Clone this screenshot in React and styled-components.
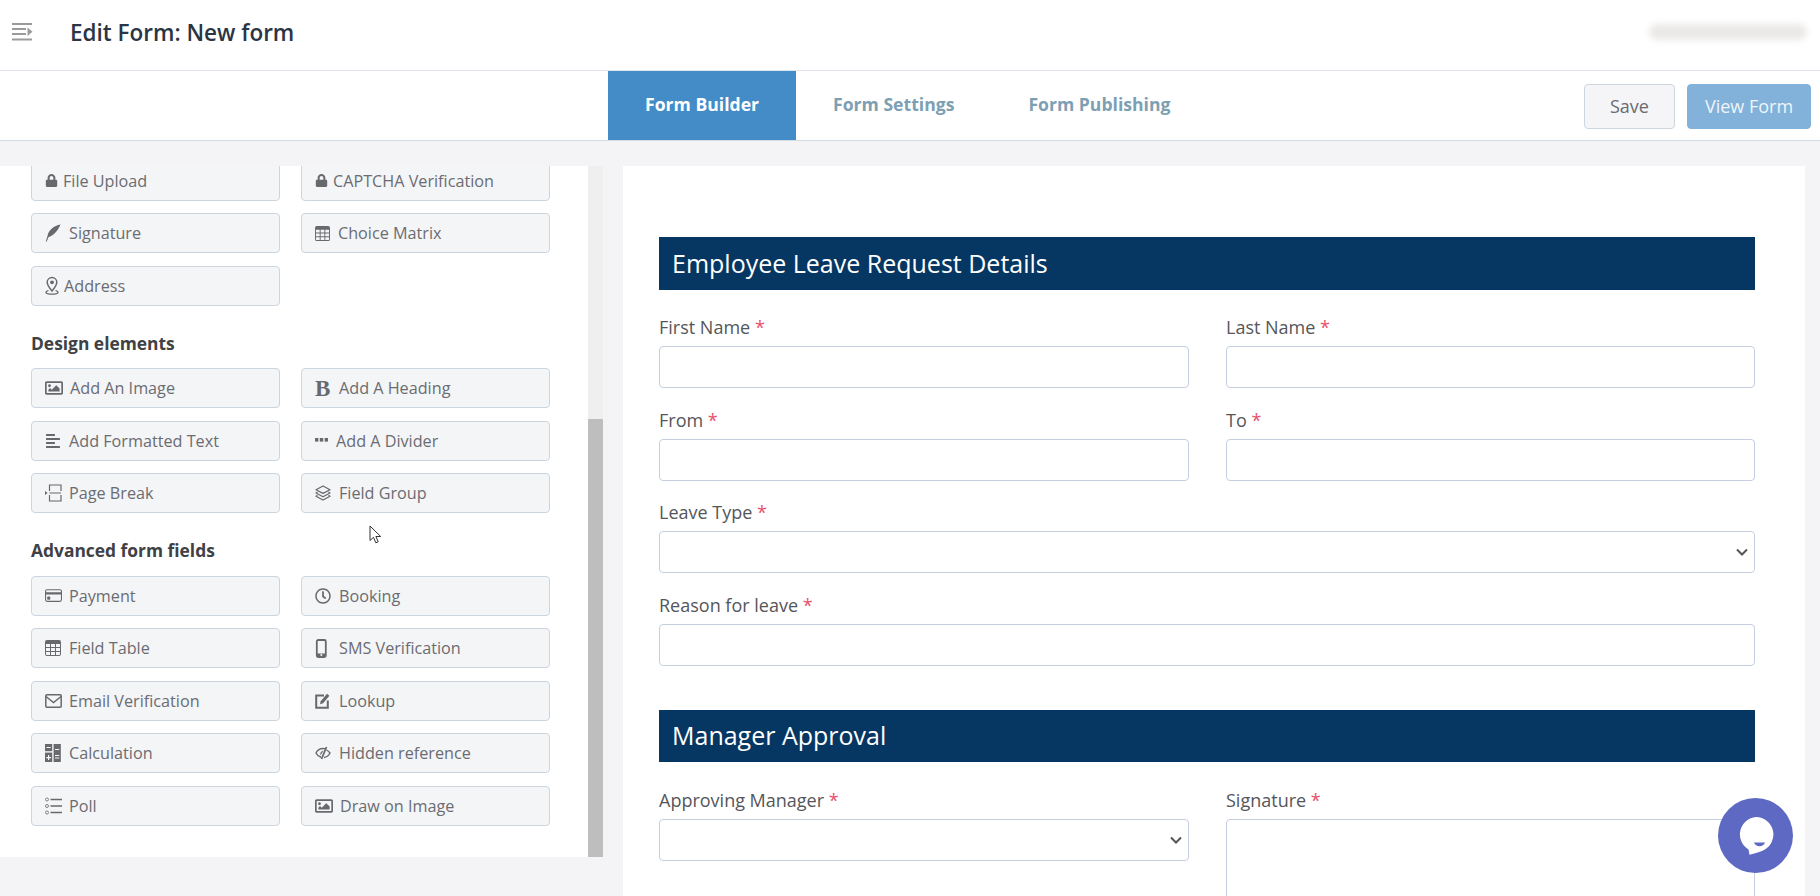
import React from 'react'
import styled, { createGlobalStyle } from 'styled-components'
import { FaLock, FaRegImage, FaAlignLeft, FaRegClock } from 'react-icons/fa'
import { BsTable, BsCreditCard } from 'react-icons/bs'

const GlobalStyle = createGlobalStyle`
  html, body { margin: 0; padding: 0; height: 100%; overflow: hidden; }
  body { font-family: "Open Sans", "Liberation Sans", sans-serif; background: #f4f4f6; }
  * { box-sizing: border-box; }
`

const Page = styled.div`
  width: 1820px;
  height: 896px;
  overflow: hidden;
  position: relative;
  background: #f4f4f6;
`
const Header = styled.header`
  height: 71px;
  background: #fff;
  border-bottom: 1px solid #dfe5ea;
  display: flex;
  align-items: center;
  padding: 0 13px 6px 12px;
`
const Title = styled.h1`
  margin: 0 0 0 37px;
  font-size: 22.5px;
  font-weight: 600;
  color: #2b3543;
`
const BlurredUser = styled.div`
  margin-left: auto;
  width: 158px;
  height: 16px;
  border-radius: 8px;
  background: #ebe9e8;
  filter: blur(3px);
`
const TabBar = styled.nav`
  height: 70px;
  background: #fff;
  border-bottom: 1px solid #d3dbe3;
  display: flex;
  align-items: stretch;
  padding: 0 9px 0 608px;
`
const Tab = styled.div`
  display: flex;
  align-items: center;
  padding: 0 37px 3px;
  font-size: 17.6px;
  font-weight: 700;
  color: ${p => (p.$active ? '#fff' : '#7d9fb3')};
  background: ${p => (p.$active ? '#448cc7' : 'transparent')};
`
const Actions = styled.div`
  margin-left: auto;
  display: flex;
  gap: 12px;
  padding-top: 13px;
`
const ActionButton = styled.div`
  height: 45px;
  width: ${p => p.$width}px;
  display: flex;
  align-items: center;
  justify-content: center;
  padding-bottom: 2px;
  border-radius: 4px;
  font-size: 18px;
  color: ${p => (p.$primary ? '#eef5fb' : '#6a6a70')};
  background: ${p => (p.$primary ? '#82b1d9' : '#f5f5f7')};
  border: 1px solid ${p => (p.$primary ? '#82b1d9' : '#cdd6de')};
`
const Body = styled.main`
  display: flex;
  padding-top: 25px;
  height: 755px;
`
const Sidebar = styled.aside`
  width: 603px;
  height: 691px;
  display: flex;
  flex: none;
  background: #fff;
  overflow: hidden;
`
const SidebarList = styled.div`
  flex: 1;
  padding: 0 38px 0 31px;
  margin-top: -5.5px;
`
const ElementGrid = styled.div`
  display: grid;
  grid-template-columns: 249px 249px;
  column-gap: 21px;
  row-gap: 12.5px;
`
const GroupTitle = styled.h3`
  margin: 26px 0 14.5px;
  font-size: 17.4px;
  line-height: 22px;
  font-weight: 700;
  color: #404145;
`
const ElementButton = styled.div`
  height: 40px;
  display: flex;
  align-items: center;
  padding-left: 13px;
  background: #f4f5f7;
  border: 1px solid #ccd5de;
  border-radius: 4px;
  font-size: 16.2px;
  color: #6b6c71;
`
const IconBox = styled.span`
  width: ${p => p.$offset - 13}px;
  flex: none;
  display: flex;
  align-items: center;
  color: #68696d;
  font-size: ${p => p.$size || 16}px;
  svg { display: block; }
`
const SerifB = styled.span`
  font-family: "Liberation Serif", serif;
  font-weight: 700;
  font-size: 23px;
  line-height: 1;
`
const ScrollTrack = styled.div`
  width: 15px;
  flex: none;
  background: #efefef;
  display: flex;
  flex-direction: column;
  padding-top: 253px;
`
const ScrollThumb = styled.div`
  flex: 1;
  background: #bebebe;
`
const Card = styled.section`
  flex: 1;
  margin: 0 15px 0 20px;
  padding: 71px 50px 0 36px;
  background: #fff;
  overflow: hidden;
`
const SectionBar = styled.div`
  height: ${p => p.$height}px;
  display: flex;
  align-items: center;
  padding: 0 0 1px 13px;
  background: #063763;
  color: #fff;
  font-size: 25px;
`
const FieldGrid = styled.div`
  display: grid;
  grid-template-columns: 530px 529px;
  column-gap: 37px;
  row-gap: 21.5px;
  margin: ${p => p.$top}px 0 44px;
`
const Field = styled.div`
  grid-column: ${p => (p.$wide ? '1 / -1' : 'auto')};
`
const Label = styled.label`
  display: block;
  height: 22px;
  line-height: 20px;
  margin-bottom: 7px;
  font-size: 18px;
  color: #55565a;
`
const Required = styled.span`
  color: #e8506a;
`
const TextInput = styled.input`
  display: block;
  width: 100%;
  height: 42px;
  background: #fff;
  border: 1px solid #c5cfe0;
  border-radius: 4px;
`
const SelectInput = styled.select`
  display: block;
  width: 100%;
  height: 42px;
  appearance: none;
  border: 1px solid #c5cfe0;
  border-radius: 4px;
  background: #fff url("data:image/svg+xml,%3Csvg xmlns='http://www.w3.org/2000/svg' width='12' height='8' viewBox='0 0 12 8'%3E%3Cpath d='M1 1.500l5 5 5-5' fill='none' stroke='%23555' stroke-width='2'/%3E%3C/svg%3E") no-repeat right 6px center;
`
const SignatureBox = styled.div`
  height: 120px;
  margin-top: 1px;
  border: 1px solid #c5cfe0;
  border-radius: 4px;
`
const ChatBubble = styled.div`
  position: absolute;
  left: 1718px;
  top: 798px;
  width: 75px;
  height: 75px;
  border-radius: 50%;
  background: #5d69c2;
  display: flex;
  align-items: center;
  justify-content: center;
`
const Cursor = styled.svg`
  position: absolute;
  left: 369px;
  top: 525px;
`

const MenuIcon = () => (
  <svg width="21" height="18" viewBox="0 0 21 18" fill="#9b9b9b">
    <rect x="0" y="0" width="20" height="2" />
    <rect x="0" y="5" width="14" height="2" />
    <rect x="0" y="10" width="14" height="2" />
    <rect x="0" y="15.5" width="20" height="2" />
    <path d="M15.5 4.5l5 4.2-5 4.2z" />
  </svg>
)
const QuillIcon = () => (
  <svg width="16" height="18" viewBox="0 0 16 18" fill="currentColor">
    <path d="M15.500.5C9 1.500 3.500 6 2.500 12L.8 17.500h.9L3.600 13C8 12 13 7 15.500.5z" />
  </svg>
)
const PinIcon = () => (
  <svg width="14" height="19" viewBox="0 0 14 19" fill="none" stroke="currentColor">
    <path d="M7 15C4 11.500 2.200 9 2.200 6.300a4.800 4.800 0 0 1 9.600 0C11.800 9 10 11.500 7 15z" strokeWidth="1.500" />
    <circle cx="7" cy="6.300" r="1.900" fill="currentColor" stroke="none" />
    <path d="M3.500 14.500C2 15 .8 15.600 1 16.600c.3 1 2.500 1.600 6 1.600s5.700-.6 6-1.600c.2-1-1-1.600-2.500-2.100" strokeWidth="1.300" />
  </svg>
)
const DividerIcon = () => (
  <svg width="13" height="5" viewBox="0 0 13 5" fill="currentColor">
    <rect x="0" y="0" width="3.4" height="3.600" />
    <rect x="4.800" y="0" width="3.400" height="3.600" />
    <rect x="9.600" y="0" width="3.400" height="3.600" />
  </svg>
)
const PageBreakIcon = () => (
  <svg width="17" height="18" viewBox="0 0 17 18" fill="none" stroke="currentColor" strokeWidth="1.200">
    <path d="M0 7l2.600 2L0 11z" fill="currentColor" stroke="none" />
    <path d="M4.500 7V1h11.500v6M4.500 11v6h11.500v-6M4.500 9h11.500" />
  </svg>
)
const LayersIcon = () => (
  <svg width="16" height="16" viewBox="0 0 16 16" fill="none" stroke="currentColor" strokeWidth="1.300" strokeLinejoin="round">
    <path d="M8 1l7 3.700-7 3.700-7-3.700z" />
    <path d="M2.500 7.100L1 8l7 3.700L15 8l-1.500-.9" />
    <path d="M2.500 10.400L1 11.300 8 15l7-3.700-1.500-.9" />
  </svg>
)
const PhoneIcon = () => (
  <svg width="12" height="19" viewBox="0 0 12 19" fill="none" stroke="currentColor">
    <rect x="1.800" y="1" width="9" height="17" rx="1.500" strokeWidth="1.800" />
    <path d="M2 14.500h8.500V18H2z" fill="currentColor" stroke="none" />
    <circle cx="6.300" cy="16" r="1" fill="#f4f5f7" stroke="none" />
  </svg>
)
const MailIcon = () => (
  <svg width="17" height="14" viewBox="0 0 17 14" fill="none" stroke="currentColor" strokeWidth="1.500">
    <rect x=".8" y=".8" width="15.400" height="12.400" rx="1" />
    <path d="M1 2.500l7.500 6 7.500-6" />
  </svg>
)
const LookupIcon = () => (
  <svg width="15" height="17" viewBox="0 0 15 17" fill="none" stroke="currentColor">
    <path d="M9 3.500H1.200v12.300h11.600V8.500" strokeWidth="2" />
    <path d="M5 12.200l.7-3 6.300-7.500 2.400 2-6.300 7.500z" fill="currentColor" stroke="none" />
  </svg>
)
const CalcIcon = () => (
  <svg width="16" height="18" viewBox="0 0 16 18" fill="currentColor">
    <rect x="0" y="0" width="7.200" height="7.200" />
    <rect x="0" y="8.600" width="7.200" height="9.400" />
    <rect x="8.600" y="0" width="7.200" height="18" />
    <path d="M1.500 3h4.200v1H1.500zM3 11h1.200v2H6v1.200H4.200V16H3v-1.800H1.200V13H3zM10 5h4.200v1H10zM10 11h4.200v1H10zM10 13.400h4.200v1H10z" fill="#f4f5f7" />
  </svg>
)
const HiddenIcon = () => (
  <svg width="16" height="14" viewBox="0 0 16 14" fill="none" stroke="currentColor">
    <path d="M6 11.200C3.800 10.600 2 9 1 7c1.500-3 4-4.500 7-4.500 1 0 1.800.2 2.500.4M11.500 4c1.500.8 2.700 1.800 3.500 3-1.300 2.500-3.500 4.200-6 4.500" strokeWidth="1.400" />
    <path d="M5.500 9.500C4.800 7 5.800 5 8.500 4.500z" fill="currentColor" stroke="none" />
    <path d="M11.500 1L6.500 13" strokeWidth="1.800" />
  </svg>
)
const PollIcon = () => (
  <svg width="17" height="18" viewBox="0 0 17 18" fill="none" stroke="currentColor">
    <circle cx="2" cy="2.500" r="1.500" strokeWidth=".8" />
    <circle cx="2" cy="9" r="1.500" strokeWidth=".8" />
    <circle cx="2" cy="15.500" r="1.500" strokeWidth=".8" />
    <path d="M5.500 2.500H17M5.500 9H17M5.500 15.500H17" strokeWidth="1.600" />
  </svg>
)
const ChatIcon = () => (
  <svg width="38" height="40" viewBox="0 0 38 40">
    <path d="M19 1a17.500 17.500 0 0 1 7 33.500c-4 1.600-8 3-13.500 4.200l-1-5.200A17.500 17.500 0 0 1 19 1z" fill="#fff" />
    <path d="M17 26.500h11c-1 2.600-3 3.800-5.500 3.800s-4.500-1.200-5.500-3.800z" fill="#5d69c2" />
  </svg>
)

const icon = (node, offset, size) => ({ node, offset, size })

const uploadFields = [
  { label: 'File Upload', icon: icon(<FaLock />, 31, 13) },
  { label: 'CAPTCHA Verification', icon: icon(<FaLock />, 31, 13) },
  { label: 'Signature', icon: icon(<QuillIcon />, 37) },
  { label: 'Choice Matrix', icon: icon(<BsTable />, 36, 15) },
  { label: 'Address', icon: icon(<PinIcon />, 32) },
]
const designFields = [
  { label: 'Add An Image', icon: icon(<FaRegImage />, 38, 18) },
  { label: 'Add A Heading', icon: icon(<SerifB>B</SerifB>, 37) },
  { label: 'Add Formatted Text', icon: icon(<FaAlignLeft />, 37, 16) },
  { label: 'Add A Divider', icon: icon(<DividerIcon />, 34) },
  { label: 'Page Break', icon: icon(<PageBreakIcon />, 37) },
  { label: 'Field Group', icon: icon(<LayersIcon />, 37) },
]
const advancedFields = [
  { label: 'Payment', icon: icon(<BsCreditCard />, 37, 17) },
  { label: 'Booking', icon: icon(<FaRegClock />, 37, 16) },
  { label: 'Field Table', icon: icon(<BsTable />, 37, 16) },
  { label: 'SMS Verification', icon: icon(<PhoneIcon />, 37) },
  { label: 'Email Verification', icon: icon(<MailIcon />, 37) },
  { label: 'Lookup', icon: icon(<LookupIcon />, 37) },
  { label: 'Calculation', icon: icon(<CalcIcon />, 37) },
  { label: 'Hidden reference', icon: icon(<HiddenIcon />, 37) },
  { label: 'Poll', icon: icon(<PollIcon />, 37) },
  { label: 'Draw on Image', icon: icon(<FaRegImage />, 38, 18) },
]

const ElementList = ({ items }) => (
  <ElementGrid>
    {items.map(item => (
      <ElementButton key={item.label}>
        <IconBox $offset={item.icon.offset} $size={item.icon.size}>{item.icon.node}</IconBox>
        {item.label}
      </ElementButton>
    ))}
  </ElementGrid>
)

const FormField = ({ label, wide, children }) => (
  <Field $wide={wide}>
    <Label>{label} <Required>*</Required></Label>
    {children}
  </Field>
)

const App = () => {
  return (
    <Page>
      <GlobalStyle />
      <Header>
        <MenuIcon />
        <Title>Edit Form: New form</Title>
        <BlurredUser />
      </Header>
      <TabBar>
        <Tab $active>Form Builder</Tab>
        <Tab>Form Settings</Tab>
        <Tab>Form Publishing</Tab>
        <Actions>
          <ActionButton $width={91}>Save</ActionButton>
          <ActionButton $width={124} $primary>View Form</ActionButton>
        </Actions>
      </TabBar>
      <Body>
        <Sidebar>
          <SidebarList>
            <ElementList items={uploadFields} />
            <GroupTitle>Design elements</GroupTitle>
            <ElementList items={designFields} />
            <GroupTitle>Advanced form fields</GroupTitle>
            <ElementList items={advancedFields} />
          </SidebarList>
          <ScrollTrack><ScrollThumb /></ScrollTrack>
        </Sidebar>
        <Card>
          <SectionBar $height={53}>Employee Leave Request Details</SectionBar>
          <FieldGrid $top={27}>
            <FormField label="First Name"><TextInput /></FormField>
            <FormField label="Last Name"><TextInput /></FormField>
            <FormField label="From"><TextInput /></FormField>
            <FormField label="To"><TextInput /></FormField>
            <FormField label="Leave Type" wide><SelectInput /></FormField>
            <FormField label="Reason for leave" wide><TextInput /></FormField>
          </FieldGrid>
          <SectionBar $height={52}>Manager Approval</SectionBar>
          <FieldGrid $top={28}>
            <FormField label="Approving Manager"><SelectInput /></FormField>
            <FormField label="Signature"><SignatureBox /></FormField>
          </FieldGrid>
        </Card>
      </Body>
      <Cursor width="13" height="19" viewBox="0 0 13 19">
        <path d="M1 1v14.500l3.500-3.200 2.300 5.500 2.400-1-2.300-5.300h4.800z" fill="#fff" stroke="#333" strokeWidth="1" />
      </Cursor>
      <ChatBubble><ChatIcon /></ChatBubble>
    </Page>
  )
}

export default App
